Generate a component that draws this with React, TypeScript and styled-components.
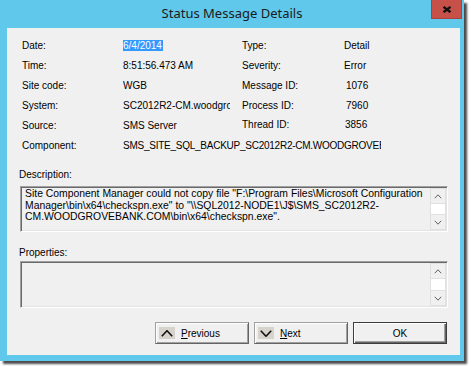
import React from 'react';
import styled, { createGlobalStyle } from 'styled-components';

const GlobalStyle = createGlobalStyle`
    body {
        margin: 0;
        background: #ffffff;
    }
`;

const Page = styled.div`
    width: 471px;
    height: 366px;
    overflow: hidden;
    background: #ffffff;
`;

const Window = styled.div`
    width: 464px;
    height: 361px;
    background: #60c8ea;
    box-shadow: 3px 3px 2px rgba(0, 0, 0, 0.7);
    display: flex;
    flex-direction: column;
`;

const TitleBar = styled.div`
    height: 28px;
    display: grid;
    grid-template-columns: 1fr auto 1fr;
    align-items: start;
`;

const Title = styled.div`
    grid-column: 2;
    font-family: 'Noto Sans', 'Liberation Sans', sans-serif;
    font-size: 13px;
    line-height: 28px;
    color: #1b1b1b;
    margin-top: -1px;
`;

const CloseButton = styled.div`
    grid-column: 3;
    justify-self: end;
    margin-right: 2px;
    width: 31px;
    height: 19px;
    box-sizing: border-box;
    background: #c75048;
    border: 1px solid #a8423c;
    border-top: none;
    display: flex;
    align-items: center;
    justify-content: center;
`;

const Client = styled.div`
    flex: 1;
    margin: 0 4px 6px 7px;
    background: #f0f0f0;
    padding: 7px 12px 0 12px;
    display: flex;
    flex-direction: column;
    font-family: 'Liberation Sans', Arial, sans-serif;
    font-size: 10px;
    color: #000000;
`;

const InfoGrid = styled.div`
    display: grid;
    grid-template-columns: 101px 119px 102px 1fr;
    grid-auto-rows: 20px;
    align-items: center;
    padding-left: 3px;
`;

const Label = styled.span<{ $lift?: number }>`
    white-space: nowrap;
    ${({ $lift }) => ($lift ? `margin-top: -${$lift * 2}px;` : '')}
`;

const Value = styled.span<{ $clip?: number; $span?: boolean; $lift?: number; $nudge?: number }>`
    white-space: nowrap;
    overflow: hidden;
    ${({ $clip }) => ($clip ? `width: ${$clip}px;` : '')}
    ${({ $span }) => ($span ? 'grid-column: 2 / 5; letter-spacing: -0.25px;' : '')}
    ${({ $lift }) => ($lift ? `margin-top: -${$lift * 2}px;` : '')}
    ${({ $nudge }) => ($nudge ? `padding-left: ${$nudge}px;` : '')}
`;

const Selected = styled.span`
    background: #3399ff;
    color: #ffffff;
    padding: 1px 1px 2px 0;
`;

const SectionLabel = styled.div<{ $top: number; $gap: number }>`
    margin-top: ${({ $top }) => $top}px;
    margin-bottom: ${({ $gap }) => $gap}px;
    line-height: 13px;
`;

const TextBox = styled.div<{ $height: number }>`
    height: ${({ $height }) => $height}px;
    margin-left: 1px;
    box-sizing: border-box;
    display: flex;
    border: 1px solid;
    border-color: #a0a0a0 #ffffff #ffffff #a0a0a0;
    box-shadow: inset 1px 1px 0 #696969, inset -1px -1px 0 #e3e3e3;
    padding: 1px;
`;

const TextContent = styled.div`
    flex: 1;
    padding: 0 3px;
    font-size: 10.4px;
    line-height: 11.5px;
    white-space: nowrap;
    overflow: hidden;
`;

const ScrollBar = styled.div`
    width: 16px;
    display: flex;
    flex-direction: column;
    background: #ffffff;
`;

const ScrollButton = styled.div`
    height: 16px;
    box-sizing: border-box;
    background: #f0f0f0;
    border: 1px solid #e0e0e0;
    display: flex;
    align-items: center;
    justify-content: center;
`;

const ScrollTrack = styled.div`
    flex: 1;
    background: #ffffff;
    border-left: 1px solid #e0e0e0;
    border-right: 1px solid #e0e0e0;
`;

const ButtonRow = styled.div`
    display: flex;
    justify-content: flex-end;
    gap: 5px;
    margin-top: 14px;
    padding-right: 1px;
`;

const Button = styled.div<{ $default?: boolean }>`
    width: 94px;
    height: 22px;
    box-sizing: border-box;
    background: #f0f0f0;
    display: flex;
    align-items: center;
    justify-content: ${({ $default }) => ($default ? 'center' : 'flex-start')};
    border: 1px solid;
    border-color: ${({ $default }) =>
        $default ? '#3c3c3c' : '#a0a0a0 #646464 #646464 #a0a0a0'};
    box-shadow: ${({ $default }) =>
        $default
            ? 'inset 1px 1px 0 #ffffff, inset -1px -1px 0 #646464, inset -2px -2px 0 #a0a0a0'
            : 'inset 1px 1px 0 #ffffff, inset -1px -1px 0 #a0a0a0'};
`;

const ButtonIcon = styled.span`
    width: 16px;
    height: 12px;
    margin-left: 3px;
    background: #d6d3cd;
    display: flex;
    align-items: center;
    justify-content: center;
`;

const ButtonText = styled.span`
    margin-left: 6px;
`;

const Chevron: React.FC<{ down?: boolean; big?: boolean }> = ({ down, big }) => {
    const w = big ? 12 : 8;
    const h = big ? 7 : 5;
    const pts = down
        ? `0.8,0.8 ${w / 2},${h - 0.8} ${w - 0.8},0.8`
        : `0.8,${h - 0.8} ${w / 2},0.8 ${w - 0.8},${h - 0.8}`;
    return (
        <svg width={w} height={h} viewBox={`0 0 ${w} ${h}`}>
            <polyline
                points={pts}
                fill="none"
                stroke={big ? '#111111' : '#606060'}
                strokeWidth={big ? 1.6 : 1}
            />
        </svg>
    );
};

const ScrollBox: React.FC<{ height: number; children?: React.ReactNode }> = ({
    height,
    children,
}) => (
    <TextBox $height={height}>
        <TextContent>{children}</TextContent>
        <ScrollBar>
            <ScrollButton>
                <Chevron />
            </ScrollButton>
            <ScrollTrack />
            <ScrollButton>
                <Chevron down />
            </ScrollButton>
        </ScrollBar>
    </TextBox>
);

const App: React.FC = () => {
    return (
        <Page>
            <GlobalStyle />
            <Window>
                <TitleBar>
                    <Title>Status Message Details</Title>
                    <CloseButton>
                        <svg width="10" height="7" viewBox="0 0 10 7">
                            <path
                                d="M1.5 0.8 L8.5 6.2 M8.5 0.8 L1.5 6.2"
                                stroke="#111"
                                strokeWidth="2.3"
                            />
                        </svg>
                    </CloseButton>
                </TitleBar>
                <Client>
                    <InfoGrid>
                        <Label>Date:</Label>
                        <Value>
                            <Selected>6/4/2014</Selected>
                        </Value>
                        <Label>Type:</Label>
                        <Value>Detail</Value>

                        <Label>Time:</Label>
                        <Value>8:51:56.473 AM</Value>
                        <Label>Severity:</Label>
                        <Value>Error</Value>

                        <Label>Site code:</Label>
                        <Value>WGB</Value>
                        <Label>Message ID:</Label>
                        <Value $nudge={2}>1076</Value>

                        <Label>System:</Label>
                        <Value $clip={107}>SC2012R2-CM.woodgro</Value>
                        <Label>Process ID:</Label>
                        <Value $nudge={2}>7960</Value>

                        <Label>Source:</Label>
                        <Value>SMS Server</Value>
                        <Label $lift={1}>Thread ID:</Label>
                        <Value $lift={1} $nudge={1}>3856</Value>

                        <Label>Component:</Label>
                        <Value $span $clip={258}>
                            SMS_SITE_SQL_BACKUP_SC2012R2-CM.WOODGROVEBA
                        </Value>
                    </InfoGrid>

                    <SectionLabel $top={13} $gap={5}>
                        Description:
                    </SectionLabel>
                    <ScrollBox height={46}>
                        Site Component Manager could not copy file "F:\Program Files\Microsoft Configuration
                        <br />
                        Manager\bin\x64\checkspn.exe" to "\\SQL2012-NODE1\J$\SMS_SC2012R2-
                        <br />
                        CM.WOODGROVEBANK.COM\bin\x64\checkspn.exe".
                    </ScrollBox>

                    <SectionLabel $top={14} $gap={2}>
                        Properties:
                    </SectionLabel>
                    <ScrollBox height={47} />

                    <ButtonRow>
                        <Button>
                            <ButtonIcon>
                                <Chevron big />
                            </ButtonIcon>
                            <ButtonText>
                                <u>P</u>revious
                            </ButtonText>
                        </Button>
                        <Button>
                            <ButtonIcon>
                                <Chevron big down />
                            </ButtonIcon>
                            <ButtonText>
                                <u>N</u>ext
                            </ButtonText>
                        </Button>
                        <Button $default>OK</Button>
                    </ButtonRow>
                </Client>
            </Window>
        </Page>
    );
};

export default App;
